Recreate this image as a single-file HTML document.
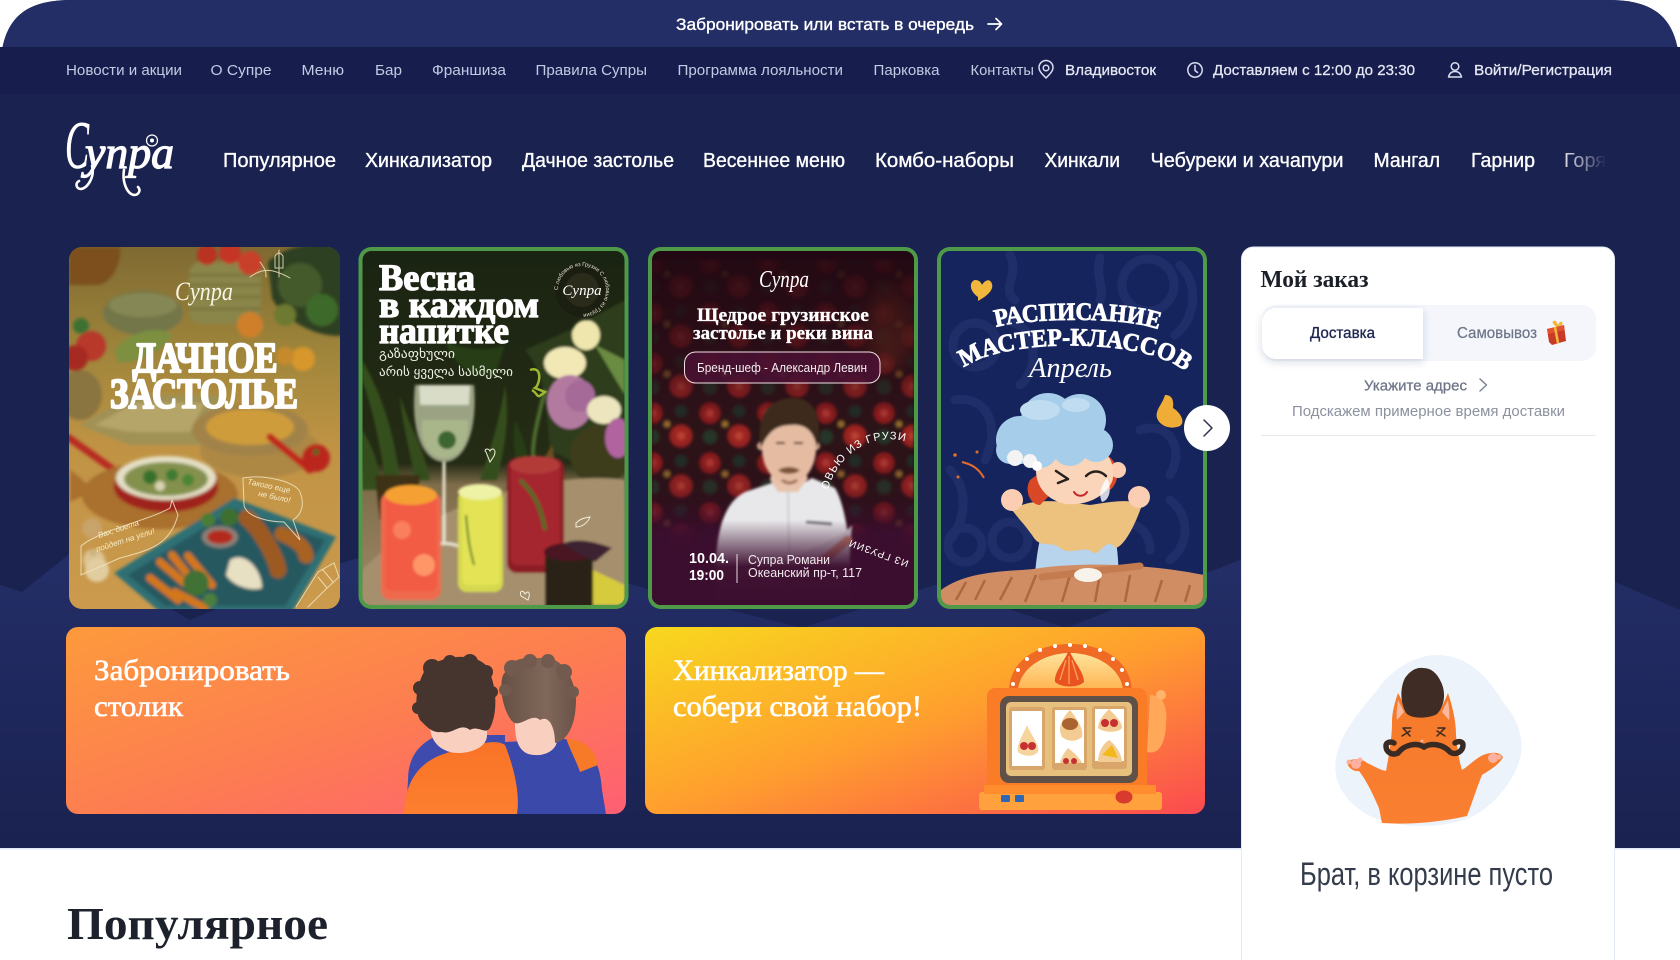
<!DOCTYPE html>
<html lang="ru"><head><meta charset="utf-8"><title>Супра</title>
<style>
html,body{margin:0;padding:0;background:#fff;width:1680px;height:960px;overflow:hidden}
svg{display:block}
text{font-family:"Liberation Sans","DejaVu Sans",sans-serif}
.s{font-family:"Liberation Serif","DejaVu Serif",serif;font-weight:700}
.l{font-size:15px;fill:#c3cae3}
.r{font-size:15px;fill:#e6e9f4;stroke:#e6e9f4;stroke-width:.25}
.n{font-size:20px;fill:#fff;stroke:#fff;stroke-width:.35}
.ic{fill:none;stroke:#d9ddee;stroke-width:1.5;stroke-linecap:round;stroke-linejoin:round}
</style></head><body>
<svg width="1680" height="960" viewBox="0 0 1680 960" xmlns="http://www.w3.org/2000/svg">
<defs>
<linearGradient id="mt" x1="0" y1="0" x2="0" y2="1"><stop offset="0" stop-color="#243069"/><stop offset=".5" stop-color="#1f285d"/><stop offset="1" stop-color="#1a2250"/></linearGradient>
<linearGradient id="wood1" x1="0" y1="0" x2="0" y2="1"><stop offset="0" stop-color="#7f6a32"/><stop offset=".3" stop-color="#a0863b"/><stop offset=".55" stop-color="#c09344"/><stop offset="1" stop-color="#cc9a4d"/></linearGradient>
<linearGradient id="b1" x1="0" y1="0" x2="1" y2="1"><stop offset="0" stop-color="#fd9a3c"/><stop offset=".55" stop-color="#fd7c52"/><stop offset="1" stop-color="#fe5f74"/></linearGradient>
<linearGradient id="b2" x1="0" y1="0" x2="1" y2="1"><stop offset="0" stop-color="#f8d81e"/><stop offset=".5" stop-color="#ff9f2e"/><stop offset="1" stop-color="#fb4a50"/></linearGradient>
<linearGradient id="c2bg" x1="0" y1="0" x2="0" y2="1"><stop offset="0" stop-color="#1a2412"/><stop offset=".6" stop-color="#252c15"/><stop offset=".66" stop-color="#7e6c4a"/><stop offset="1" stop-color="#a08a68"/></linearGradient>
<linearGradient id="c3ov" x1="0" y1="0" x2="0" y2="1"><stop offset="0" stop-color="#210812" stop-opacity=".94"/><stop offset=".3" stop-color="#2a0a16" stop-opacity=".72"/><stop offset=".5" stop-color="#300a1e" stop-opacity=".18"/><stop offset=".68" stop-color="#300a1e" stop-opacity=".35"/><stop offset=".8" stop-color="#3b0d2e" stop-opacity=".95"/><stop offset="1" stop-color="#3b0d2e"/></linearGradient>
<linearGradient id="c3b" x1="0" y1="0" x2="0" y2="1"><stop offset="0" stop-color="#3b0d2e" stop-opacity="0"/><stop offset=".55" stop-color="#3b0d2e" stop-opacity=".97"/><stop offset="1" stop-color="#3b0d2e"/></linearGradient>
<linearGradient id="fade" gradientUnits="userSpaceOnUse" x1="1564" y1="0" x2="1606" y2="0"><stop offset="0" stop-color="#fff" stop-opacity=".85"/><stop offset=".55" stop-color="#fff" stop-opacity=".45"/><stop offset="1" stop-color="#fff" stop-opacity="0"/></linearGradient>
<linearGradient id="slotd" x1="0" y1="0" x2="0" y2="1"><stop offset="0" stop-color="#ffe39b"/><stop offset="1" stop-color="#ffb451"/></linearGradient>
<linearGradient id="cat" x1="0" y1="0" x2="0" y2="1"><stop offset="0" stop-color="#f47a2a"/><stop offset="1" stop-color="#fb7f30"/></linearGradient>
<linearGradient id="hair2" x1="0" y1="0" x2="1" y2="0"><stop offset="0" stop-color="#665045"/><stop offset=".6" stop-color="#80675a"/><stop offset="1" stop-color="#6a5347"/></linearGradient>
<linearGradient id="body1" x1="0" y1="0" x2="0" y2="1"><stop offset="0" stop-color="#f97326"/><stop offset="1" stop-color="#fd7f30"/></linearGradient>
<filter id="bl" x="-10%" y="-10%" width="120%" height="120%"><feGaussianBlur stdDeviation="1.2"/></filter>
<filter id="blp" x="-10%" y="-10%" width="120%" height="120%"><feGaussianBlur stdDeviation="1.7"/></filter>
<filter id="bl8" x="-30%" y="-30%" width="160%" height="160%"><feGaussianBlur stdDeviation="8"/></filter>
<filter id="sh" x="-10%" y="-20%" width="120%" height="150%"><feDropShadow dx="0" dy="3" stdDeviation="4" flood-color="#2a3566" flood-opacity=".18"/></filter>
<clipPath id="c1"><rect x="69" y="247" width="271" height="362" rx="13"/></clipPath>
<clipPath id="c2"><rect x="362.500" y="251" width="262" height="354" rx="9"/></clipPath>
<clipPath id="c3"><rect x="652" y="251" width="262" height="354" rx="9"/></clipPath>
<clipPath id="c4"><rect x="941" y="251" width="262" height="354" rx="9"/></clipPath>
<clipPath id="bc1"><rect x="66" y="627" width="560" height="187" rx="12"/></clipPath>
<clipPath id="bc2"><rect x="645" y="627" width="560" height="187" rx="12"/></clipPath>
<clipPath id="navc"><rect x="220" y="130" width="1388" height="60"/></clipPath>
<pattern id="carpet" width="58" height="50" patternUnits="userSpaceOnUse">
<rect width="58" height="50" fill="#2a1512"/>
<circle cx="14" cy="13" r="10" fill="#a8241f"/><circle cx="14" cy="13" r="4" fill="#d8443a"/>
<circle cx="43" cy="36" r="11" fill="#b52a24"/><circle cx="43" cy="36" r="4" fill="#dc5038"/>
<circle cx="43" cy="11" r="6" fill="#1b382a"/><circle cx="14" cy="37" r="7" fill="#20402b"/>
<circle cx="29" cy="24" r="3" fill="#b88a34"/>
</pattern>
</defs>

<rect width="1680" height="960" fill="#fff"/>
<path d="M0 76C0 20 22 0 72 0H1608C1658 0 1680 20 1680 76V848H0Z" fill="#1a2250"/>
<polygon points="0,585 22,592 72,552 190,620 300,575 455,530 650,590 802,628 935,585 1066,628 1240,560 1400,540 1615,582 1680,610 1680,848 0,848" fill="url(#mt)"/>
<path d="M0 47V76C0 20 22 0 72 0H1608C1658 0 1680 20 1680 76V47Z" fill="#242e66"/>
<rect y="47" width="1680" height="47" fill="#171e4e"/>
<rect y="848" width="1680" height="1.500" fill="#dfe8f8"/>

<text x="676" y="30" font-size="16.500" fill="#fff" stroke="#fff" stroke-width=".35" textLength="298" lengthAdjust="spacingAndGlyphs">Забронировать или встать в очередь</text>
<path d="M988 24H1001M996 18.500L1001.500 24L996 29.500" fill="none" stroke="#fff" stroke-width="1.700" stroke-linecap="round" stroke-linejoin="round"/>

<text class="l" x="66" y="75" textLength="116" lengthAdjust="spacingAndGlyphs">Новости и акции</text>
<text class="l" x="210.500" y="75" textLength="61" lengthAdjust="spacingAndGlyphs">О Супре</text>
<text class="l" x="301.500" y="75" textLength="42.500" lengthAdjust="spacingAndGlyphs">Меню</text>
<text class="l" x="375" y="75" textLength="27" lengthAdjust="spacingAndGlyphs">Бар</text>
<text class="l" x="432" y="75" textLength="74" lengthAdjust="spacingAndGlyphs">Франшиза</text>
<text class="l" x="535.500" y="75" textLength="111.500" lengthAdjust="spacingAndGlyphs">Правила Супры</text>
<text class="l" x="677.500" y="75" textLength="165.500" lengthAdjust="spacingAndGlyphs">Программа лояльности</text>
<text class="l" x="873.500" y="75" textLength="66" lengthAdjust="spacingAndGlyphs">Парковка</text>
<text class="l" x="970.500" y="75" textLength="63.500" lengthAdjust="spacingAndGlyphs">Контакты</text>
<path class="ic" d="M1046 78C1042 74 1039 71 1039 67.500A7 7 0 0 1 1053 67.500C1053 71 1050 74 1046 78Z"/><circle class="ic" cx="1046" cy="68" r="2.800"/>
<text class="r" x="1065" y="75" textLength="91" lengthAdjust="spacingAndGlyphs">Владивосток</text>
<circle class="ic" cx="1195" cy="70" r="7.200"/><path class="ic" d="M1195 65.500V70.500L1197.500 72.500"/>
<text class="r" x="1213" y="75" textLength="202" lengthAdjust="spacingAndGlyphs">Доставляем с 12:00 до 23:30</text>
<circle class="ic" cx="1455" cy="66.500" r="3.800"/><path class="ic" d="M1448.500 77C1449.500 73 1452 71.500 1455 71.500S1460.500 73 1461.500 77Z"/>
<text class="r" x="1474" y="75" textLength="138" lengthAdjust="spacingAndGlyphs">Войти/Регистрация</text>

<!-- logo -->
<g fill="#fff">
<text class="s" style="font-weight:400;font-style:italic" x="65" y="168" font-size="68" stroke="#fff" stroke-width=".6" textLength="24" lengthAdjust="spacingAndGlyphs">С</text>
<text class="s" style="font-weight:400;font-style:italic" x="85" y="168" font-size="46" stroke="#fff" stroke-width="1.200" textLength="89" lengthAdjust="spacingAndGlyphs">упра</text>
</g>
<path d="M92 166C95 176 88 188 81 189C76 189 75 183 79 181M124 170C122 182 127 194 134 195C139 195 141 190 138 187" fill="none" stroke="#fff" stroke-width="2.600" stroke-linecap="round"/>
<circle cx="152" cy="140.500" r="5.500" fill="none" stroke="#fff" stroke-width="1.200"/><circle cx="152" cy="140.500" r="2" fill="#fff"/>

<g clip-path="url(#navc)">
<text class="n" x="223" y="167" textLength="113" lengthAdjust="spacingAndGlyphs">Популярное</text>
<text class="n" x="365" y="167" textLength="127" lengthAdjust="spacingAndGlyphs">Хинкализатор</text>
<text class="n" x="522" y="167" textLength="152" lengthAdjust="spacingAndGlyphs">Дачное застолье</text>
<text class="n" x="703" y="167" textLength="142" lengthAdjust="spacingAndGlyphs">Весеннее меню</text>
<text class="n" x="875" y="167" textLength="139" lengthAdjust="spacingAndGlyphs">Комбо-наборы</text>
<text class="n" x="1044.500" y="167" textLength="75.500" lengthAdjust="spacingAndGlyphs">Хинкали</text>
<text class="n" x="1150.500" y="167" textLength="193" lengthAdjust="spacingAndGlyphs">Чебуреки и хачапури</text>
<text class="n" x="1373.500" y="167" textLength="66.500" lengthAdjust="spacingAndGlyphs">Мангал</text>
<text class="n" x="1471" y="167" textLength="64" lengthAdjust="spacingAndGlyphs">Гарнир</text>
<text x="1564" y="167" font-size="20" fill="url(#fade)" textLength="42" lengthAdjust="spacingAndGlyphs">Горя</text>
</g>

<!-- CARD 1 -->
<g clip-path="url(#c1)">
<rect x="69" y="247" width="271" height="362" fill="url(#wood1)"/>
<g filter="url(#blp)">
<path d="M69 247H120C122 262 112 285 96 285H69Z" fill="#7c4f1e"/>
<rect x="189" y="262" width="72" height="62" rx="12" fill="#8a8549"/>
<path d="M189 275H261M189 285H261M189 297H261M189 309H261" stroke="#6c6834" stroke-width="1.600"/>
<circle cx="207" cy="255" r="10" fill="#b93224"/><circle cx="230" cy="253" r="11" fill="#c53426"/><circle cx="250" cy="263" r="12" fill="#c9412a"/>
<path d="M268 262C290 240 340 240 345 250V335C320 340 282 320 272 298Z" fill="#2f3f24"/>
<circle cx="300" cy="285" r="22" fill="#445a2b"/><circle cx="322" cy="310" r="16" fill="#3d6b2a"/><circle cx="285" cy="315" r="11" fill="#6d7a30"/>
<ellipse cx="143" cy="313" rx="40" ry="22" fill="#73764a"/><ellipse cx="143" cy="305" rx="34" ry="12" fill="#858855"/>
<ellipse cx="80" cy="395" rx="22" ry="25" fill="#8a7440"/><circle cx="91" cy="346" r="15" fill="#b83729"/><circle cx="75" cy="358" r="13" fill="#a62a20"/><circle cx="81" cy="326" r="8" fill="#3d7130"/>
<path d="M115 350C130 330 160 325 172 335C165 350 135 365 118 362Z" fill="#7b9040"/>
<circle cx="303" cy="359" r="12" fill="#d8972b"/><circle cx="285" cy="356" r="9" fill="#c78a2a"/><circle cx="250" cy="325" r="13" fill="#cf7f2c"/>
<path d="M80 425L130 395H225L200 445H130Z" fill="#a09155"/><path d="M95 425L135 403H205L190 432H130Z" fill="#b5a568"/>
<ellipse cx="260" cy="450" rx="60" ry="28" fill="#ad8845"/><ellipse cx="250" cy="430" rx="58" ry="26" fill="#a18348"/><ellipse cx="250" cy="427" rx="44" ry="18" fill="#cf9c3a"/>
<path d="M270 437L310 470" stroke="#c0281e" stroke-width="7" stroke-linecap="round"/>
<circle cx="316" cy="458" r="14" fill="#ba281e"/><circle cx="316" cy="452" r="3" fill="#3e6a24"/>
<path d="M69 438L125 478" stroke="#b82a20" stroke-width="7" stroke-linecap="round"/>
<ellipse cx="160" cy="495" rx="78" ry="34" fill="#a9702e"/><path d="M70 470C85 480 90 490 95 490L70 502Z" fill="#a9702e"/>
<ellipse cx="166" cy="487" rx="52" ry="25" fill="#a0221b"/><ellipse cx="166" cy="478" rx="50" ry="22" fill="#e4dfc4"/><ellipse cx="166" cy="479" rx="42" ry="17" fill="#84914e"/>
<circle cx="150" cy="477" r="7" fill="#35712c"/><circle cx="172" cy="475" r="6" fill="#3f7a30"/><circle cx="188" cy="480" r="6" fill="#4c8534"/><circle cx="160" cy="486" r="5" fill="#d9d3b0"/>
<polygon points="114,573 234,498 336,537 292,612 160,612" fill="#2f6f74"/>
<polygon points="128,575 234,509 325,540 285,606 165,606" fill="#25585f"/>
<path d="M247 518C262 530 277 560 278 570" stroke="#9c5a22" stroke-width="17" fill="none" stroke-linecap="round"/>
<path d="M282 534C295 540 305 546 306 556" stroke="#a86224" stroke-width="15" fill="none" stroke-linecap="round"/>
<ellipse cx="220" cy="537" rx="18" ry="11" fill="#8b8178"/><ellipse cx="220" cy="537" rx="13" ry="7" fill="#b32c1e"/>
<circle cx="229" cy="517" r="9" fill="#3c6f2f"/><circle cx="208" cy="520" r="7" fill="#4a7d34"/>
<path d="M230 560C245 550 262 570 262 588C250 592 232 585 226 575Z" fill="#e8e0c3"/>
<path d="M160 562L190 588M172 555L200 590M150 578L178 600M188 556L212 585M175 592L205 608" stroke="#d3761f" stroke-width="8" stroke-linecap="round"/>
<circle cx="196" cy="583" r="13" fill="#3f7136"/><circle cx="210" cy="600" r="7" fill="#4e7e3c"/>
<circle cx="94" cy="560" r="11" fill="#dbc391"/><circle cx="97" cy="570" r="12" fill="#e2cda0"/><circle cx="93" cy="553" r="3" fill="#c8ae7d"/>
<circle cx="92" cy="528" r="10" fill="#c8a36a"/>
</g>
<g fill="none" stroke="#f1e4c0" stroke-width="1" stroke-linecap="round" opacity=".85">
<path d="M243 478C265 474 296 482 300 492C306 508 299 516 293 520L300 540L284 522C272 522 246 518 244 505Z"/>
<path d="M81 575L81 546C100 530 150 520 170 508L172 500L178 515C170 545 150 550 120 558Z"/>
<path d="M296 607L318 572L334 563L339 577L325 590L308 607"/>
<path d="M323 570L333 582M318 577L327 588"/>
<path d="M260 262C266 270 266 272 266 277M250 277C262 268 272 268 290 278M279 250V277M275 256C278 252 280 252 283 256V268H275Z"/>
</g>
<text x="247" y="484" font-size="8" fill="#f7ecc9" font-style="italic" transform="rotate(12 247 484)">Такого еще</text>
<text x="258" y="496" font-size="8" fill="#f7ecc9" font-style="italic" transform="rotate(12 258 496)">не было!</text>
<text x="99" y="538" font-size="8" fill="#f7ecc9" font-style="italic" transform="rotate(-18 99 538)">Вах, диета</text>
<text x="97" y="552" font-size="8" fill="#f7ecc9" font-style="italic" transform="rotate(-18 97 552)">пойдет на угли!</text>
<text class="s" style="font-weight:400;font-style:italic" x="175" y="300" font-size="26" fill="#f8f4e0" textLength="58" lengthAdjust="spacingAndGlyphs">Супра</text>
<text class="s" x="205" y="372" font-size="42" fill="#fff" stroke="#fff" stroke-width="2.200" stroke-linejoin="round" text-anchor="middle" textLength="145" lengthAdjust="spacingAndGlyphs">ДАЧНОЕ</text>
<text class="s" x="204" y="408" font-size="42" fill="#fff" stroke="#fff" stroke-width="2.200" stroke-linejoin="round" text-anchor="middle" textLength="188" lengthAdjust="spacingAndGlyphs">ЗАСТОЛЬЕ</text>
</g>

<!-- CARD 2 -->
<rect x="358.500" y="247" width="270" height="362" rx="13" fill="#4f9a48"/>
<g clip-path="url(#c2)">
<rect x="362" y="251" width="263" height="354" fill="url(#c2bg)"/>
<g filter="url(#bl)">
<path d="M362 360C385 400 395 440 400 480L385 480C380 440 370 400 362 380Z" fill="#35501c"/>
<path d="M400 395C410 430 425 450 430 480H415C410 450 402 425 400 395ZM505 385C500 420 490 450 480 480L497 480C505 445 510 420 505 385ZM362 430C375 450 380 470 382 490H362Z" fill="#344e1d"/>
<path d="M515 420C525 440 530 460 530 480H518C515 455 512 440 515 420ZM445 340C460 350 490 352 505 345L495 375C480 378 455 372 445 340Z" fill="#283c16"/>
<path d="M525 350C540 370 545 380 550 450L590 470H625V300L570 330Z" fill="#2e3c1a"/>
<circle cx="600" cy="455" r="30" fill="#3e3e1e"/>
<path d="M552 445C556 470 560 475 570 478H532Z" fill="#6a4e20"/>
<path d="M375 475H420L415 520H380Z" fill="#3e3218"/>
<ellipse cx="565" cy="363" rx="21" ry="16" fill="#f1e8b5"/><ellipse cx="586" cy="335" rx="14" ry="15" fill="#efe6ae"/>
<ellipse cx="570" cy="402" rx="23" ry="27" fill="#b37aa0"/><ellipse cx="580" cy="396" rx="15" ry="16" fill="#a66a98"/><ellipse cx="604" cy="410" rx="17" ry="14" fill="#ece5bd"/>
<ellipse cx="618" cy="438" rx="13" ry="20" fill="#b0649f"/><path d="M595 345L625 395V360Z" fill="#6b8c42"/>
<path d="M545 390C535 430 530 450 535 470" stroke="#4d6c2e" stroke-width="4" fill="none"/>
<path d="M362 570C430 500 560 470 625 480V605H362Z" fill="#a58f6d"/>
<path d="M415 385C410 435 425 462 444 462C463 462 478 435 474 385Z" fill="#b9c0a0" opacity=".8"/>
<path d="M419 385H470L469 405H420Z" fill="#e4e8d4" opacity=".85"/>
<path d="M422 420C420 445 430 458 444 458C458 458 470 445 468 420Z" fill="#a9b68a"/>
<path d="M444 462V545M427 548C435 542 453 542 462 548" stroke="#e7e3cd" stroke-width="3" fill="none"/>
<circle cx="447" cy="440" r="9" fill="#3c6530"/>
<rect x="381" y="492" width="60" height="108" rx="10" fill="#ef6a4e"/><rect x="385" y="495" width="52" height="96" rx="7" fill="#f25c44"/>
<ellipse cx="411" cy="495" rx="26" ry="10" fill="#f5a030"/><circle cx="402" cy="530" r="9" fill="#fa7f5c"/><circle cx="424" cy="565" r="11" fill="#ff9668"/>
<rect x="458" y="490" width="45" height="102" rx="9" fill="#d6d850"/><rect x="462" y="490" width="38" height="95" rx="6" fill="#e3e355"/>
<ellipse cx="480" cy="492" rx="22" ry="8" fill="#eef2a5"/>
<path d="M466 515C468 540 470 550 474 565" stroke="#5a7a30" stroke-width="2" fill="none"/>
<rect x="507" y="458" width="57" height="115" rx="10" fill="#8c1f28"/><rect x="511" y="465" width="49" height="100" rx="6" fill="#a5262f"/>
<ellipse cx="535" cy="465" rx="25" ry="9" fill="#b23a38"/><path d="M520 480C530 490 540 500 545 530" stroke="#4f6a28" stroke-width="4" fill="none"/>
<rect x="545" y="552" width="48" height="55" fill="#2a2218"/><ellipse cx="569" cy="552" rx="25" ry="9" fill="#4a1520"/>
<path d="M562 544C575 538 590 540 612 548L595 562Z" fill="#3e2230"/>
<path d="M593 570L625 585V605H593Z" fill="#d6cb3d"/>
</g>
<g fill="none" stroke="#f4f0dc" stroke-width="1" stroke-linecap="round"><path d="M486 452C483 450 488 447 490 451C492 447 497 449 494 456L490 462Z"/><path d="M576 523C581 518 585 518 590 517C588 522 583 527 576 527Z"/><path d="M521 596C519 590 523 590 525 594C528 590 531 592 528 600Z"/></g>
<path d="M530 370C543 365 540 385 535 388L545 392C535 400 540 395 532 390" fill="none" stroke="#a0b830" stroke-width="2.500"/>
<text class="s" x="379" y="290" font-size="37" fill="#fff" stroke="#fff" stroke-width="1.300" stroke-linejoin="round" textLength="96" lengthAdjust="spacingAndGlyphs">Весна</text>
<text class="s" x="379" y="317" font-size="37" fill="#fff" stroke="#fff" stroke-width="1.300" stroke-linejoin="round" textLength="160" lengthAdjust="spacingAndGlyphs">в каждом</text>
<text class="s" x="379" y="343" font-size="37" fill="#fff" stroke="#fff" stroke-width="1.300" stroke-linejoin="round" textLength="130" lengthAdjust="spacingAndGlyphs">напитке</text>
<text x="379" y="358" font-size="13" fill="#eef0e4" textLength="76" lengthAdjust="spacingAndGlyphs">გაზაფხული</text>
<text x="379" y="376" font-size="13" fill="#eef0e4" textLength="134" lengthAdjust="spacingAndGlyphs">არის ყველა სასმელი</text>
<circle cx="582" cy="290" r="27" fill="#1a1a10" fill-opacity=".55"/><circle cx="582" cy="290" r="17" fill="#2b2b1b"/>
<text class="s" style="font-weight:400;font-style:italic" x="582" y="295" font-size="15" fill="#fff" text-anchor="middle">Супра</text>
<path id="arc2" d="M558 290A24 24 0 1 1 606 290A24 24 0 1 1 558 290" fill="none"/>
<text font-size="5.500" fill="#e9e6cf"><textPath href="#arc2">С любовью из Грузии  С любовью из Грузии</textPath></text>
</g>

<!-- CARD 3 -->
<rect x="648" y="247" width="270" height="362" rx="13" fill="#4f9a48"/>
<g clip-path="url(#c3)">
<rect x="652" y="251" width="262" height="354" fill="#2b0a16"/>
<g filter="url(#blp)"><rect x="652" y="260" width="262" height="300" fill="url(#carpet)"/></g>
<ellipse cx="890" cy="325" rx="24" ry="42" fill="#e06a20" opacity=".55" filter="url(#bl8)"/>
<rect x="652" y="251" width="262" height="354" fill="url(#c3ov)"/>
<g filter="url(#bl)">
<path d="M715 602C714 540 720 505 745 492L775 482L795 488L812 478L835 488C848 510 852 560 850 602Z" fill="#e8e8ea"/>
<path d="M788 490L790 602" stroke="#c6c6ca" stroke-width="1.500"/><path d="M790 560C815 545 840 540 852 525L848 580C825 580 805 580 790 585Z" fill="#d5d5d8"/>
<path d="M806 522L832 524" stroke="#6a6a70" stroke-width="3"/>
<path d="M770 480C772 462 800 462 808 478L798 492H778Z" fill="#e8c3ac"/>
<circle cx="761" cy="446" r="4" fill="#d6a78e"/><circle cx="816" cy="446" r="4" fill="#d6a78e"/>
<ellipse cx="789" cy="448" rx="27" ry="36" fill="#e5bca2"/>
<path d="M761 448C755 412 772 398 793 398C815 398 823 418 817 448C814 432 806 424 792 425C776 425 768 432 761 448Z" fill="#3e2c1c"/>
<path d="M778 470C785 466 793 466 800 470C796 475 782 475 778 470Z" fill="#7c523a"/>
<path d="M782 480C787 484 792 484 797 480" stroke="#9c6c52" stroke-width="3" fill="none"/>
<path d="M776 443H785M794 443H803" stroke="#3a241a" stroke-width="2"/>
<path d="M848 540L812 570" stroke="#c98870" stroke-width="9" stroke-linecap="round"/>
</g>
<rect x="652" y="520" width="262" height="85" fill="url(#c3b)"/>
<text class="s" style="font-weight:400;font-style:italic" x="759" y="287" font-size="24" fill="#fff" textLength="50" lengthAdjust="spacingAndGlyphs">Супра</text>
<text class="s" x="783" y="321" font-size="19" fill="#fff" stroke="#fff" stroke-width=".3" text-anchor="middle" textLength="172" lengthAdjust="spacingAndGlyphs">Щедрое грузинское</text>
<text class="s" x="783" y="339" font-size="19" fill="#fff" stroke="#fff" stroke-width=".3" text-anchor="middle" textLength="180" lengthAdjust="spacingAndGlyphs">застолье и реки вина</text>
<rect x="684.500" y="352" width="195.500" height="31" rx="11" fill="#4a1234" fill-opacity=".85" stroke="#f0dfe2" stroke-width="1"/>
<text x="697" y="372" font-size="13" fill="#f5eef0" textLength="170" lengthAdjust="spacingAndGlyphs">Бренд-шеф - Александр Левин</text>
<path id="arc3" d="M828 490C836 460 866 430 908 442" fill="none"/>
<text font-size="11" fill="#fff" letter-spacing="1"><textPath href="#arc3">ОВЬЮ ИЗ ГРУЗИ</textPath></text>
<text x="847" y="540" font-size="10" fill="#fff" transform="rotate(200 880 545)" letter-spacing="1">ИЗ ГРУЗИИ</text>
<text x="689" y="563" font-size="15" font-weight="700" fill="#fff" textLength="40" lengthAdjust="spacingAndGlyphs">10.04.</text>
<text x="689" y="580" font-size="15" font-weight="700" fill="#fff" textLength="35" lengthAdjust="spacingAndGlyphs">19:00</text>
<rect x="736.500" y="554" width="1" height="29" fill="#e8d8e0"/>
<text x="748" y="564" font-size="13" fill="#f2e9ee" textLength="82" lengthAdjust="spacingAndGlyphs">Супра Романи</text>
<text x="748" y="577" font-size="13" fill="#f2e9ee" textLength="114" lengthAdjust="spacingAndGlyphs">Океанский пр-т, 117</text>
</g>

<!-- CARD 4 -->
<rect x="937" y="247" width="270" height="362" rx="13" fill="#4f9a48"/>
<g clip-path="url(#c4)">
<rect x="941" y="251" width="263" height="354" fill="#16245d"/>
<g fill="none" stroke="#1f2e69" stroke-width="9" stroke-linecap="round">
<path d="M1010 255C1020 275 1000 290 1015 300"/><circle cx="1148" cy="285" r="26"/><path d="M1100 258C1095 275 1105 290 1100 300M1180 265C1200 285 1195 320 1175 335"/>
<circle cx="975" cy="345" r="22"/><path d="M1000 320C1040 320 1040 370 1020 385"/><path d="M955 400C990 395 1000 430 985 460"/>
<circle cx="1010" cy="540" r="18"/><path d="M950 470C970 490 965 520 950 540M1140 430C1170 420 1185 450 1170 475M1170 500C1190 515 1190 545 1170 560M1100 530C1125 515 1150 525 1150 550"/>
<circle cx="965" cy="545" r="17"/>
</g>
<path d="M978 297C968 290 970 281 975 280C979 280 981 282 982 285C985 280 990 278 992 284C994 291 985 297 978 301Z" fill="#f0b73c"/>
<path d="M1165 395C1172 395 1174 400 1173 408C1180 412 1186 422 1180 426C1170 430 1160 426 1157 418C1155 410 1162 405 1165 395Z" fill="#efad37"/>
<path id="a41" d="M996 327C1030 318 1125 316 1160 330L1178 338" fill="none"/>
<path id="a42" d="M964 368C1000 338 1150 336 1188 374L1196 384" fill="none"/>
<text class="s" font-size="25" fill="#fff" stroke="#fff" stroke-width=".8"><textPath href="#a41" textLength="164" lengthAdjust="spacingAndGlyphs">РАСПИСАНИЕ</textPath></text>
<text class="s" font-size="25" fill="#fff" stroke="#fff" stroke-width=".8"><textPath href="#a42" textLength="230" lengthAdjust="spacingAndGlyphs">МАСТЕР-КЛАССОВ</textPath></text>
<text class="s" style="font-weight:400;font-style:italic" x="1029" y="377" font-size="28" fill="#fff" textLength="83" lengthAdjust="spacingAndGlyphs">Апрель</text>
<path d="M1035 588C1034 565 1040 525 1053 505H1104C1116 525 1120 560 1118 588Z" fill="#b8d4ec"/>
<path d="M1012 510C1030 498 1055 500 1090 505C1110 502 1130 498 1142 505C1135 525 1125 545 1116 548C1105 535 1100 558 1092 552C1085 545 1070 556 1060 548C1052 540 1040 550 1032 535C1025 525 1018 518 1012 510Z" fill="#edc17e"/>
<circle cx="1012" cy="500" r="11" fill="#fbcdb3"/><circle cx="1139" cy="497" r="11" fill="#fbcdb3"/>
<path d="M1030 480C1024 490 1030 505 1040 505L1050 495L1044 470Z" fill="#d94826"/>
<path d="M1100 452C1120 458 1122 480 1110 490L1100 480Z" fill="#dd4a28"/>
<circle cx="1118" cy="470" r="8" fill="#fbcdb3"/>
<path d="M1036 470C1036 450 1070 448 1092 448C1112 450 1116 470 1112 482C1104 498 1085 506 1065 504C1048 500 1036 488 1036 470Z" fill="#fbd5b9"/>
<path d="M1056 471L1068 479M1068 479L1058 483" stroke="#26201c" stroke-width="2.500" fill="none" stroke-linecap="round"/>
<path d="M1086 476C1092 470 1100 470 1106 476" stroke="#26201c" stroke-width="2.500" fill="none" stroke-linecap="round"/>
<path d="M1074 492C1077 497 1084 497 1087 492" stroke="#c8242c" stroke-width="2" fill="none" stroke-linecap="round"/>
<path d="M1107 478C1112 488 1110 500 1102 502C1098 494 1101 486 1107 478Z" fill="#fff" opacity=".8"/>
<g fill="#a6cde9"><circle cx="1020" cy="440" r="24"/><circle cx="1048" cy="420" r="27"/><circle cx="1080" cy="420" r="26"/><circle cx="1096" cy="445" r="17"/><circle cx="1040" cy="450" r="18"/><circle cx="1070" cy="448" r="18"/><circle cx="1010" cy="450" r="14"/></g>
<g fill="#c0dcf0"><ellipse cx="1040" cy="410" rx="20" ry="10"/><ellipse cx="1076" cy="405" rx="14" ry="7"/></g>
<circle cx="1015" cy="458" r="8" fill="#f2f3f2"/><circle cx="1030" cy="461" r="7" fill="#f3f4f3"/><circle cx="1037" cy="466" r="5" fill="#fff"/>
<path d="M962 462C970 464 978 467 984 478" stroke="#e36b2c" stroke-width="2" fill="none"/><circle cx="955" cy="455" r="1.800" fill="#e36b2c"/><circle cx="977" cy="452" r="1.500" fill="#e36b2c"/><circle cx="958" cy="477" r="1.500" fill="#e36b2c"/>
<path d="M941 590C970 568 1020 572 1040 568C1085 562 1150 564 1204 575V605H941Z" fill="#d08c62"/>
<path d="M956 600L966 582M975 600L985 580M1000 600L1012 577M1025 602L1036 575M1062 602L1070 575M1095 602L1100 574M1125 602L1130 575M1155 602L1162 580M1185 602L1190 585" stroke="#ad683d" stroke-width="2.500" fill="none"/>
<path d="M1042 577L1140 566" stroke="#c47b4f" stroke-width="7" stroke-linecap="round"/>
<ellipse cx="1088" cy="575" rx="14" ry="7" fill="#f8f3ea"/>
</g>
<circle cx="1207" cy="428" r="23" fill="#fff"/>
<path d="M1204 420L1212 428L1204 436" fill="none" stroke="#2c3347" stroke-width="1.500" stroke-linecap="round" stroke-linejoin="round"/>

<!-- BANNER 1 -->
<g clip-path="url(#bc1)">
<rect x="66" y="627" width="560" height="187" fill="url(#b1)"/>
<path d="M408 780C408 760 416 745 438 735H505V814H406Z" fill="#3f4cae"/>
<path d="M565 739C590 745 600 760 602 790L606 814H505L505 742Z" fill="#3b49ab"/>
<path d="M566 738C585 740 597 752 598 765L580 772C576 760 570 750 566 738Z" fill="#f77a28"/>
<path d="M404 814C405 780 420 760 450 752C475 745 495 738 505 745C515 770 520 795 517 814Z" fill="url(#body1)"/>
<path d="M430 725H487V735C487 748 470 753 458 753C445 753 430 745 430 725Z" fill="#f9d0c0"/>
<path d="M515 715H557V740C557 750 545 756 535 755C522 755 515 745 515 725Z" fill="#f9cfc0"/>
<path d="M442 660C455 655 480 655 488 668C498 690 497 715 490 728C485 735 478 725 470 730C460 722 453 735 442 732C432 733 428 728 420 720C412 705 418 675 430 664Z" fill="#46352f"/>
<g fill="#46352f"><circle cx="432" cy="668" r="9"/><circle cx="450" cy="662" r="7"/><circle cx="470" cy="662" r="8"/><circle cx="486" cy="672" r="7"/><circle cx="492" cy="692" r="6"/><circle cx="420" cy="688" r="7"/><circle cx="418" cy="708" r="6"/></g>
<path d="M513 662C525 655 535 660 548 657C565 662 575 680 576 700C576 720 570 740 555 743C555 725 548 715 540 720C532 712 520 728 513 722C505 715 498 690 503 675Z" fill="url(#hair2)"/>
<g fill="#735a4e"><circle cx="512" cy="668" r="8"/><circle cx="530" cy="661" r="7"/><circle cx="548" cy="661" r="7"/><circle cx="564" cy="672" r="8"/><circle cx="573" cy="692" r="6"/><circle cx="505" cy="690" r="6"/></g>
</g>
<text class="s" style="font-weight:400" x="94" y="680" font-size="30" fill="#fff" stroke="#fff" stroke-width=".6" textLength="196" lengthAdjust="spacingAndGlyphs">Забронировать</text>
<text class="s" style="font-weight:400" x="94" y="716" font-size="30" fill="#fff" stroke="#fff" stroke-width=".6" textLength="89" lengthAdjust="spacingAndGlyphs">столик</text>

<!-- BANNER 2 -->
<g clip-path="url(#bc2)">
<rect x="645" y="627" width="560" height="187" fill="url(#b2)"/>
<path d="M1009 690C1010 660 1038 644 1070 644C1102 644 1130 660 1132 690Z" fill="#ef6a24"/>
<path d="M1018 690C1020 668 1044 653 1070 653C1096 653 1121 668 1123 690Z" fill="url(#slotd)"/>
<g fill="#fff"><circle cx="1013" cy="684" r="2"/><circle cx="1018" cy="670" r="2"/><circle cx="1027" cy="659" r="2"/><circle cx="1040" cy="650" r="2"/><circle cx="1055" cy="646" r="2"/><circle cx="1070" cy="645" r="2"/><circle cx="1085" cy="646" r="2"/><circle cx="1100" cy="650" r="2"/><circle cx="1113" cy="659" r="2"/><circle cx="1122" cy="670" r="2"/><circle cx="1127" cy="684" r="2"/></g>
<path d="M1068 652C1064 662 1054 672 1055 682C1062 688 1078 688 1084 682C1084 672 1074 662 1070 652Z" fill="#e9531f"/>
<path d="M1060 680L1066 660M1069 684V656M1078 680L1072 660" stroke="#ff9c50" stroke-width="1.400"/>
<path d="M1150 695C1162 695 1168 705 1166 725C1165 745 1158 755 1147 752Z" fill="#ffa85a"/><circle cx="1161" cy="695" r="5" fill="#ffb36c"/>
<rect x="987" y="688" width="160" height="106" rx="8" fill="#fb7c27"/>
<rect x="1000" y="696" width="138" height="87" rx="9" fill="#5f5048"/>
<rect x="1006" y="702" width="126" height="74" rx="5" fill="#e7c07d"/>
<rect x="1009" y="707" width="36" height="63" rx="3" fill="#d8a66b"/><rect x="1012" y="711" width="30" height="55" fill="#fff"/>
<rect x="1052" y="707" width="35" height="63" rx="3" fill="#d8a66b"/><rect x="1055" y="710" width="29" height="53" fill="#fff"/>
<rect x="1092" y="706" width="35" height="63" rx="3" fill="#d8a66b"/><rect x="1095" y="709" width="29" height="52" fill="#fff"/>
<path d="M1027 725C1023 735 1016 745 1018 752C1024 757 1034 757 1038 752C1040 745 1031 735 1027 725Z" fill="#f5d49d"/>
<circle cx="1024" cy="746" r="4" fill="#c63030"/><circle cx="1032" cy="746" r="4" fill="#c63030"/>
<path d="M1070 710C1060 720 1058 730 1062 737C1068 742 1076 742 1082 737C1084 730 1078 720 1070 710Z" fill="#f3cc93"/><ellipse cx="1070" cy="724" rx="8" ry="6" fill="#a9642f"/>
<path d="M1068 748C1062 755 1060 762 1060 763H1082C1081 760 1075 753 1068 748Z" fill="#f3cc93"/><circle cx="1066" cy="761" r="3" fill="#c63030"/><circle cx="1074" cy="761" r="3" fill="#c63030"/>
<path d="M1109 709C1102 716 1098 722 1098 728C1104 733 1118 733 1122 728C1122 722 1116 716 1109 709Z" fill="#f3cc93"/><circle cx="1105" cy="723" r="4" fill="#c63030"/><circle cx="1114" cy="723" r="4" fill="#c63030"/>
<path d="M1109 740C1101 745 1098 755 1098 762H1122C1122 755 1116 745 1109 740Z" fill="#f3cc93"/><path d="M1102 755L1112 745L1118 758Z" fill="#f3b81a"/>
<rect x="979" y="792" width="183" height="18" rx="3" fill="#ffa23d"/><rect x="984" y="785" width="172" height="9" fill="#ff8d2e"/>
<rect x="1001" y="795" width="9" height="7" rx="1" fill="#2f67b5"/><rect x="1015" y="795" width="9" height="7" rx="1" fill="#2f67b5"/>
<ellipse cx="1124" cy="797" rx="8.500" ry="6.500" fill="#d83a2e"/>
</g>
<text class="s" style="font-weight:400" x="673" y="680" font-size="30" fill="#fff" stroke="#fff" stroke-width=".6" textLength="211" lengthAdjust="spacingAndGlyphs">Хинкализатор —</text>
<text class="s" style="font-weight:400" x="673" y="716" font-size="30" fill="#fff" stroke="#fff" stroke-width=".6" textLength="249" lengthAdjust="spacingAndGlyphs">собери свой набор!</text>

<text class="s" x="67" y="939" font-size="46" fill="#1c212c" textLength="261" lengthAdjust="spacingAndGlyphs">Популярное</text>

<!-- ORDER PANEL -->
<path d="M1241.500 962V259A12 12 0 0 1 1253.500 247H1602.500A12 12 0 0 1 1614.500 259V962Z" fill="#fff" stroke="#e3e9f5" stroke-width="1"/>
<text class="s" x="1260.500" y="287" font-size="24" fill="#1b2028" textLength="108" lengthAdjust="spacingAndGlyphs">Мой заказ</text>
<rect x="1262" y="305" width="334" height="56" rx="14" fill="#f4f6fc"/>
<path d="M1276 308H1423V359H1276A14 14 0 0 1 1262 345V322A14 14 0 0 1 1276 308Z" fill="#fff" filter="url(#sh)"/>
<text x="1310" y="338" font-size="15.500" fill="#1f2650" stroke="#1f2650" stroke-width=".35" textLength="65" lengthAdjust="spacingAndGlyphs">Доставка</text>
<text x="1457" y="338" font-size="15.500" fill="#6d7488" stroke="#6d7488" stroke-width=".2" textLength="80" lengthAdjust="spacingAndGlyphs">Самовывоз</text>
<path d="M1547 329L1564 325L1566 341L1552 345L1549 342Z" fill="#c93a26"/><path d="M1547 329L1564 325L1564.500 330L1548 334Z" fill="#e25232"/><path d="M1555 327L1558 343" stroke="#f0b83c" stroke-width="2.500"/>
<path d="M1556 327C1551 322 1552 320 1556 321L1558 325C1560 320 1564 321 1562 325Z" fill="#f3b535"/>
<text x="1364" y="390.500" font-size="15" fill="#6d7488" stroke="#6d7488" stroke-width=".25" textLength="103" lengthAdjust="spacingAndGlyphs">Укажите адрес</text>
<path d="M1480 379L1486.500 385L1480 391" fill="none" stroke="#7d8494" stroke-width="1.500" stroke-linecap="round" stroke-linejoin="round"/>
<text x="1292" y="416" font-size="15" fill="#8b919e" textLength="273" lengthAdjust="spacingAndGlyphs">Подскажем примерное время доставки</text>
<rect x="1261" y="435" width="335" height="1" fill="#e5e7ea"/>

<path d="M1437 655C1470 655 1490 680 1505 705C1520 722 1526 745 1518 765C1508 790 1487 812 1464 820C1430 830 1385 828 1360 810C1340 795 1330 775 1338 750C1345 725 1370 700 1385 680C1400 665 1418 655 1437 655Z" fill="#edf3fb"/>
<path d="M1398 693C1402 700 1404 708 1408 712H1438C1442 708 1445 700 1448 693C1452 705 1456 720 1456 735C1457 748 1459 760 1462 770C1470 765 1478 756 1486 754C1492 752 1500 752 1503 757C1500 764 1490 770 1482 775C1476 790 1472 803 1467 816C1440 822 1410 825 1382 823C1380 815 1380 810 1378 806C1372 792 1366 780 1359 771C1354 772 1348 768 1347 762C1352 758 1362 758 1367 763C1374 766 1380 770 1386 771C1389 755 1392 738 1392 722C1392 712 1395 702 1398 693Z" fill="url(#cat)"/>
<path d="M1398 700C1397 708 1396 714 1397 720L1404 712ZM1448 700C1449 708 1450 714 1449 720L1442 712Z" fill="#fbb8a0"/>
<path d="M1423 668C1431 668 1437 673 1441 682C1446 692 1445 706 1437 714C1428 719 1411 719 1406 713C1400 702 1400 688 1405 678C1410 671 1416 667 1423 668Z" fill="#3f2c24"/>
<path d="M1424 747C1416 742 1404 745 1398 753C1392 756 1386 752 1386 746C1386 742 1391 741 1394 743" fill="none" stroke="#3a2a24" stroke-width="5.500" stroke-linecap="round"/>
<path d="M1424 747C1432 742 1444 745 1450 752C1456 756 1463 751 1463 745C1463 741 1458 741 1455 743" fill="none" stroke="#3a2a24" stroke-width="5.500" stroke-linecap="round"/>
<path d="M1403 728L1410 736M1410 731L1402 736M1403 728H1411M1445 728L1437 736M1437 731L1445 736M1438 728H1445" stroke="#3a2a24" stroke-width="1.500" fill="none" stroke-linecap="round"/>
<circle cx="1422" cy="741" r="1.500" fill="#f9b29a"/>
<g fill="#fcb0a0"><circle cx="1356" cy="764" r="5"/><circle cx="1493" cy="758" r="5"/><circle cx="1349" cy="762" r="2.500"/><circle cx="1360" cy="760" r="2.500"/><circle cx="1499" cy="757" r="2.500"/></g>
<text x="1300" y="885" font-size="32" fill="#343c4b" textLength="253" lengthAdjust="spacingAndGlyphs">Брат, в корзине пусто</text>
</svg>
</body></html>
